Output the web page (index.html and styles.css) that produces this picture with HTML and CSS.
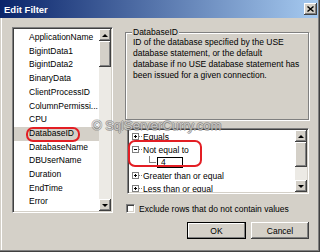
FILE: index.html
```html
<!DOCTYPE html>
<html lang="en">
<head>
    <meta charset="UTF-8">
    <meta name="viewport" content="width=device-width, initial-scale=1.0">
    <title>Edit Filter</title>
    <link rel="stylesheet" href="styles.css">
</head>
<body>

    <div class="window">
        <div class="titlebar">
            <span class="title">Edit Filter</span>
            <span class="close">
                <svg width="7" height="6" viewBox="0 0 7 6"><path d="M0.5 0.5l6 5M6.5 0.5l-6 5" stroke="#000" stroke-width="1.4" fill="none"/></svg>
            </span>
        </div>

        <div class="body">
            <div class="listbox">
                <ul class="items">
                    <li>ApplicationName</li>
                    <li>BigintData1</li>
                    <li>BigintData2</li>
                    <li>BinaryData</li>
                    <li>ClientProcessID</li>
                    <li>ColumnPermissi...</li>
                    <li>CPU</li>
                    <li class="selected">DatabaseID<span class="ring"></span></li>
                    <li>DatabaseName</li>
                    <li>DBUserName</li>
                    <li>Duration</li>
                    <li>EndTime</li>
                    <li>Error</li>
                </ul>
                <div class="scrollbar">
                    <div class="sb-btn"><span class="arrow up"></span></div>
                    <div class="sb-thumb list-thumb"></div>
                    <div class="sb-track"></div>
                    <div class="sb-btn"><span class="arrow down"></span></div>
                </div>
            </div>

            <div class="right">
                <fieldset class="group">
                    <legend>DatabaseID</legend>
                    <p>ID of the database specified by the USE<br>database statement, or the default<br>database if no USE database statement has<br>been issued for a given connection.</p>
                </fieldset>

                <div class="tree">
                    <ul>
                        <li><span class="exp"><svg width="7" height="7" viewBox="0 0 7 7"><rect x="0.5" y="0.5" width="6" height="6" fill="#fff" stroke="#808080"/><path d="M2 3.5h3M3.5 2v3" stroke="#000"/></svg></span><span class="dots"></span>Equals</li>
                        <li><span class="exp"><svg width="7" height="7" viewBox="0 0 7 7"><rect x="0.5" y="0.5" width="6" height="6" fill="#fff" stroke="#808080"/><path d="M2 3.5h3" stroke="#000"/></svg></span><span class="dots"></span>Not equal to</li>
                        <li class="child"><span class="elbow"></span><span class="edit">4</span></li>
                        <li><span class="exp"><svg width="7" height="7" viewBox="0 0 7 7"><rect x="0.5" y="0.5" width="6" height="6" fill="#fff" stroke="#808080"/><path d="M2 3.5h3M3.5 2v3" stroke="#000"/></svg></span><span class="dots"></span>Greater than or equal</li>
                        <li><span class="exp"><svg width="7" height="7" viewBox="0 0 7 7"><rect x="0.5" y="0.5" width="6" height="6" fill="#fff" stroke="#808080"/><path d="M2 3.5h3M3.5 2v3" stroke="#000"/></svg></span><span class="dots"></span>Less than or equal</li>
                    </ul>
                    <div class="scrollbar">
                        <div class="sb-btn"><span class="arrow up"></span></div>
                        <div class="sb-thumb tree-thumb"></div>
                        <div class="sb-track"></div>
                        <div class="sb-btn"><span class="arrow down"></span></div>
                    </div>
                    <span class="ring tree-ring"></span>
                </div>

                <label class="check"><span class="box"></span>Exclude rows that do not contain values</label>

                <div class="buttons">
                    <button class="btn default">OK</button>
                    <button class="btn">Cancel</button>
                </div>
            </div>
        </div>

        <div class="watermark">© SqlServerCurry.com</div>
    </div>

</body>
</html>
```

FILE: styles.css
```css
* {
    box-sizing: border-box;
}
body {
    margin: 0;
    font-family: "Liberation Sans", Arial, sans-serif;
    font-size: 8.5px;
    color: #000;
    background: #d4d0c8;
}
.window {
    position: relative;
    width: 320px;
    height: 252px;
    overflow: hidden;
    background: #d4d0c8;
    box-shadow: inset -1px -1px 0 #404040, inset -2px -2px 0 #808080, inset 1px 0 0 #d4d0c8, inset 2px 0 0 #fff;
}
.titlebar {
    height: 18px;
    margin-right: 2px;
    padding-left: 4px;
    display: flex;
    align-items: center;
    justify-content: space-between;
    background: linear-gradient(to right, #0a246a, #a6caf0);
}
.title {
    color: #fff;
    font-weight: bold;
    font-size: 9.5px;
}
.close {
    width: 13px;
    height: 12px;
    margin-right: 1px;
    display: flex;
    align-items: center;
    justify-content: center;
    background: #d4d0c8;
    box-shadow: inset -1px -1px 0 #404040, inset 1px 1px 0 #fff, inset -2px -2px 0 #808080;
}
.close svg {
    display: block;
}
.body {
    display: flex;
    gap: 12px;
    padding: 9px 0 0 12px;
}

/* list of columns */
.listbox, .tree {
    display: flex;
    background: #fff;
    padding: 1px;
    border: 1px solid;
    border-color: #808080 #fff #fff #808080;
    box-shadow: inset 1px 1px 0 #404040, inset -1px -1px 0 #d4d0c8;
}
.listbox {
    width: 101px;
    height: 186px;
}
.items {
    flex: 1;
    min-width: 0;
    margin: 0;
    padding: 2px 0 0;
    list-style: none;
    line-height: 13.7px;
    overflow: hidden;
}
.items li {
    position: relative;
    padding-left: 15px;
    white-space: nowrap;
    overflow: hidden;
}
.items li.selected {
    background: #d4d0c8;
    overflow: visible;
}
.ring {
    position: absolute;
    border: 2px solid #e31e24;
    border-radius: 7px;
}
.items .ring {
    left: 12px;
    top: 0;
    width: 54px;
    height: 15px;
}

/* scrollbars */
.scrollbar {
    width: 12px;
    flex: none;
    display: flex;
    flex-direction: column;
    background: #eceae5;
}
.sb-btn, .sb-thumb {
    flex: none;
    background: #d4d0c8;
    box-shadow: inset -1px -1px 0 #404040, inset 1px 1px 0 #fff, inset -2px -2px 0 #808080;
}
.sb-btn {
    height: 12px;
    display: flex;
    align-items: center;
    justify-content: center;
}
.list-thumb {
    height: 26px;
}
.tree-thumb {
    height: 25px;
}
.sb-track {
    flex: 1;
}
.arrow {
    width: 0;
    height: 0;
    border-left: 3px solid transparent;
    border-right: 3px solid transparent;
}
.arrow.up {
    border-bottom: 3px solid #000;
}
.arrow.down {
    border-top: 3px solid #000;
}

/* right side */
.right {
    width: 184px;
    display: flex;
    flex-direction: column;
}
.group {
    margin: 0;
    padding: 0 4px 0 7px;
    height: 93px;
    border: 1px solid #808080;
    box-shadow: inset 1px 1px 0 #fff, 1px 1px 0 #fff;
}
.group legend {
    padding: 0 1px;
    margin-left: -1px;
    line-height: 10px;
    background: #d4d0c8;
}
.group p {
    margin: 0;
    line-height: 11px;
    white-space: nowrap;
}
.tree {
    position: relative;
    height: 66px;
    margin: 8px 0 0 2px;
}
.tree ul {
    flex: 1;
    margin: 0;
    padding: 0 0 0 3px;
    list-style: none;
    overflow: hidden;
}
.tree li {
    display: flex;
    align-items: center;
    height: 13px;
    white-space: nowrap;
}
.exp svg {
    display: block;
}
.dots {
    width: 3px;
    margin-right: 1px;
    border-top: 1px dotted #808080;
}
.tree li.child {
    padding-left: 17px;
}
.elbow {
    align-self: flex-start;
    width: 7px;
    height: 7px;
    border-left: 1px solid #808080;
    border-bottom: 1px solid #808080;
}
.edit {
    margin-left: 1px;
    width: 26px;
    height: 11px;
    padding-left: 3px;
    line-height: 9px;
    border: 1px solid #000;
    background: #fff;
}
.tree-ring {
    left: 0;
    top: 11px;
    width: 74px;
    height: 27px;
}
.check {
    display: flex;
    align-items: center;
    gap: 4px;
    height: 13px;
    margin: 8px 0 0 1px;
}
.box {
    width: 9px;
    height: 9px;
    background: #fff;
    border: 1px solid;
    border-color: #808080 #fff #fff #808080;
    box-shadow: inset 1px 1px 0 #404040, inset -1px -1px 0 #d4d0c8;
}
.buttons {
    display: flex;
    justify-content: flex-end;
    gap: 5px;
    margin-top: 7px;
}
.btn {
    width: 58px;
    height: 17px;
    padding: 0;
    font: inherit;
    color: #000;
    border: 0;
    background: #d4d0c8;
    box-shadow: inset -1px -1px 0 #404040, inset 1px 1px 0 #fff, inset -2px -2px 0 #808080;
}
.btn.default {
    width: 59px;
    border: 1px solid #000;
    box-shadow: inset -1px -1px 0 #808080, inset 1px 1px 0 #fff;
}
.watermark {
    position: absolute;
    left: 92px;
    top: 118px;
    font-size: 13px;
    line-height: 15px;
    white-space: nowrap;
    color: rgba(255, 255, 255, 0.55);
    text-shadow: 1px 0 0 rgba(90, 90, 90, 0.45), -1px 0 0 rgba(90, 90, 90, 0.45), 0 1px 0 rgba(90, 90, 90, 0.45), 0 -1px 0 rgba(90, 90, 90, 0.45);
    pointer-events: none;
}
```
